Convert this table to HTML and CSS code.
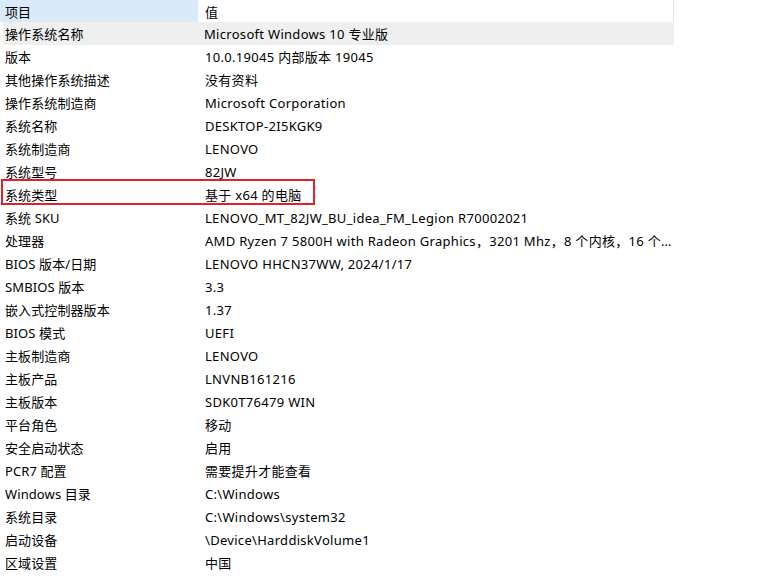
FILE: index.html
```html
<!DOCTYPE html>
<html lang="zh-CN">
<head>
<meta charset="utf-8">
<title>系统摘要</title>
<link rel="stylesheet" href="styles.css">
</head>
<body>
<div class="list">
  <div class="head">
    <div class="hcell hcell-key">项目</div>
    <div class="hcell hcell-val">值</div>
    <div class="hsep"></div>
  </div>
  <div class="row row-sel"><div class="k">操作系统名称</div><div class="v">Microsoft Windows 10 专业版</div></div>
  <div class="row"><div class="k">版本</div><div class="v">10.0.19045 内部版本 19045</div></div>
  <div class="row"><div class="k">其他操作系统描述</div><div class="v">没有资料</div></div>
  <div class="row"><div class="k">操作系统制造商</div><div class="v">Microsoft Corporation</div></div>
  <div class="row"><div class="k">系统名称</div><div class="v">DESKTOP-2I5KGK9</div></div>
  <div class="row"><div class="k">系统制造商</div><div class="v">LENOVO</div></div>
  <div class="row"><div class="k">系统型号</div><div class="v">82JW</div></div>
  <div class="row row-mark"><div class="k">系统类型</div><div class="v">基于 x64 的电脑</div><span class="mark"></span></div>
  <div class="row"><div class="k">系统 SKU</div><div class="v">LENOVO_MT_82JW_BU_idea_FM_Legion R70002021</div></div>
  <div class="row"><div class="k">处理器</div><div class="v">AMD Ryzen 7 5800H with Radeon Graphics，3201 Mhz，8 个内核，16 个逻辑处理器</div></div>
  <div class="row"><div class="k">BIOS 版本/日期</div><div class="v">LENOVO HHCN37WW, 2024/1/17</div></div>
  <div class="row"><div class="k">SMBIOS 版本</div><div class="v">3.3</div></div>
  <div class="row"><div class="k">嵌入式控制器版本</div><div class="v">1.37</div></div>
  <div class="row"><div class="k">BIOS 模式</div><div class="v">UEFI</div></div>
  <div class="row"><div class="k">主板制造商</div><div class="v">LENOVO</div></div>
  <div class="row"><div class="k">主板产品</div><div class="v">LNVNB161216</div></div>
  <div class="row"><div class="k">主板版本</div><div class="v">SDK0T76479 WIN</div></div>
  <div class="row"><div class="k">平台角色</div><div class="v">移动</div></div>
  <div class="row"><div class="k">安全启动状态</div><div class="v">启用</div></div>
  <div class="row"><div class="k">PCR7 配置</div><div class="v">需要提升才能查看</div></div>
  <div class="row"><div class="k">Windows 目录</div><div class="v">C:\Windows</div></div>
  <div class="row"><div class="k">系统目录</div><div class="v">C:\Windows\system32</div></div>
  <div class="row"><div class="k">启动设备</div><div class="v">\Device\HarddiskVolume1</div></div>
  <div class="row"><div class="k">区域设置</div><div class="v">中国</div></div>
</div>
</body>
</html>
```
FILE: styles.css
```css
html, body {
  margin: 0;
  padding: 0;
  background: #ffffff;
}
body {
  font-family: "Noto Sans", "Noto Sans CJK SC", sans-serif;
  font-size: 13px;
  color: #000000;
  width: 767px;
  height: 579px;
  overflow: hidden;
}
.list {
  width: 674px;
}
.head {
  display: flex;
  height: 22px;
}
.hcell {
  display: flex;
  align-items: center;
  height: 22px;
}
.hcell-key {
  width: 193px;
  padding-left: 5px;
  background: #d9eaf8;
}
.hcell-val {
  width: 468px;
  padding-left: 7px;
}
.hsep {
  width: 1px;
  height: 22px;
  background: #e3e3e3;
}
.row {
  position: relative;
  display: flex;
  align-items: center;
  height: 23px;
}
.row-sel {
  background: #efefef;
  margin-left: 3px;
}
.row-sel .k {
  width: 194px;
  padding-left: 2px;
}
.k {
  width: 195px;
  padding-left: 5px;
  white-space: nowrap;
  flex: none;
  letter-spacing: 0.1px;
}
.v {
  width: 467px;
  padding-left: 5px;
  white-space: nowrap;
  overflow: hidden;
  text-overflow: ellipsis;
  flex: none;
  letter-spacing: 0.3px;
}
.mark {
  position: absolute;
  left: 1px;
  top: -4px;
  width: 310px;
  height: 22px;
  border: 2px solid #e0202a;
}
```
